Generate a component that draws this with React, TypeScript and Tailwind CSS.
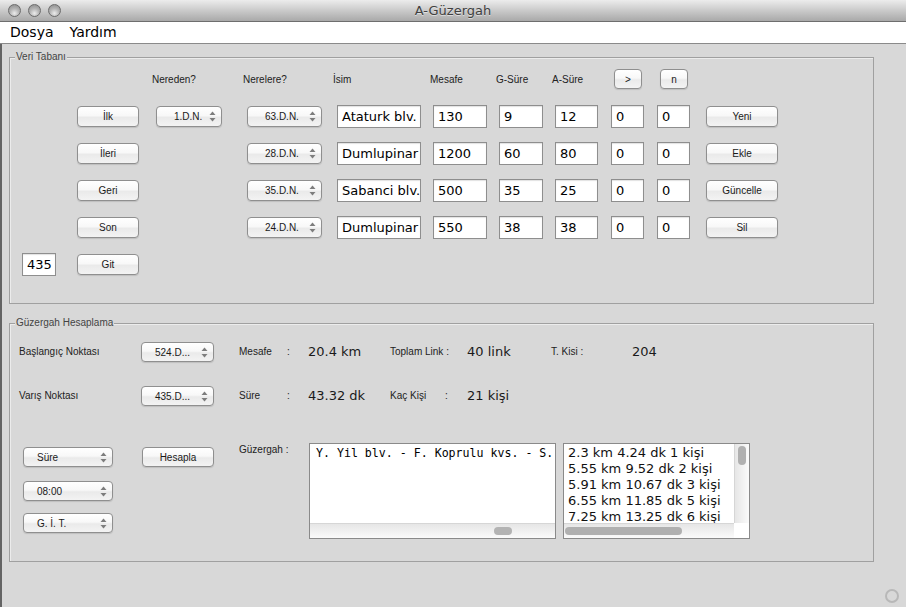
import React from "react";

const dv = "font-['DejaVu_Sans',sans-serif]";
const lib = "font-['Liberation_Sans',Arial,sans-serif]";
const mono = "font-['DejaVu_Sans_Mono',monospace]";
const btnBg =
  "bg-[linear-gradient(to_bottom,#ffffff_0%,#f8f8f8_45%,#eaeaea_55%,#f3f3f3_100%)]";

function Arrows() {
  return (
    <svg width="7" height="11" viewBox="0 0 7 11" className="shrink-0">
      <path d="M3.5 0.5L6.5 4H0.5Z" fill="#7d7d7d" />
      <path d="M0.5 7H6.5L3.5 10.5Z" fill="#7d7d7d" />
    </svg>
  );
}

function Btn({ label, className = "" }: { label: string; className?: string }) {
  return (
    <div
      className={`flex items-center justify-center rounded-[4px] border border-[#8f8f8f] ${btnBg} shadow-[0_1px_1px_rgba(0,0,0,0.12)] text-[10px] text-[#1a1a1a] ${lib} ${className}`}
    >
      {label}
    </div>
  );
}

function Combo({ label, className = "" }: { label: string; className?: string }) {
  return (
    <div
      className={`flex items-center justify-between rounded-[4px] border border-[#8f8f8f] ${btnBg} shadow-[0_1px_1px_rgba(0,0,0,0.12)] text-[10px] text-[#1a1a1a] ${lib} pr-[5px] ${className}`}
    >
      <span>{label}</span>
      <Arrows />
    </div>
  );
}

function TF({ value, className = "" }: { value: string; className?: string }) {
  return (
    <div
      className={`flex items-center h-[23px] bg-white border border-[#8e8e8e] shadow-[inset_0_1px_1px_rgba(0,0,0,0.12)] pl-[4px] text-[13px] text-black whitespace-nowrap overflow-hidden ${dv} ${className}`}
    >
      {value}
    </div>
  );
}

function Label({ text, className = "" }: { text: string; className?: string }) {
  return (
    <span className={`block text-[10px] leading-[12px] text-[#222] whitespace-nowrap ${lib} ${className}`}>{text}</span>
  );
}

function Val({ text, className = "" }: { text: string; className?: string }) {
  return (
    <div className={`flex items-center text-[13px] leading-[16px] text-[#1a1a1a] whitespace-nowrap ${dv} ${className}`}>{text}</div>
  );
}

const rows = [
  { btn: "İlk", from: "1.D.N.", to: "63.D.N.", name: "Ataturk blv.", m: "130", g: "9", a: "12", act: "Yeni" },
  { btn: "İleri", from: "", to: "28.D.N.", name: "Dumlupinar", m: "1200", g: "60", a: "80", act: "Ekle" },
  { btn: "Geri", from: "", to: "35.D.N.", name: "Sabanci blv.", m: "500", g: "35", a: "25", act: "Güncelle" },
  { btn: "Son", from: "", to: "24.D.N.", name: "Dumlupinar", m: "550", g: "38", a: "38", act: "Sil" },
];

const listItems = [
  "2.3 km 4.24 dk 1 kişi",
  "5.55 km 9.52 dk 2 kişi",
  "5.91 km 10.67 dk 3 kişi",
  "6.55 km 11.85 dk 5 kişi",
  "7.25 km 13.25 dk 6 kişi",
];

export default function App() {
  return (
    <div className="relative w-[906px] h-[607px] overflow-hidden bg-[#d8d8d8] flex flex-col">
      {/* Title bar */}
      <div className="h-[22px] shrink-0 border-b border-[#6e6e6e] bg-[linear-gradient(to_bottom,#ececec,#cacaca_50%,#a9a9a9)] grid grid-cols-[1fr_auto_1fr] items-center">
        <div className="flex items-center gap-[7px] pl-[8px]">
          {[0, 1, 2].map((i) => (
            <div
              key={i}
              className="w-[13px] h-[13px] rounded-full border border-[#6c6c6c] bg-[radial-gradient(circle_at_50%_75%,#ececec_0%,#b6b6b6_45%,#888888_100%)]"
            />
          ))}
        </div>
        <div className={`text-[13px] text-[#404040] [text-shadow:0_1px_0_rgba(255,255,255,0.5)] ${dv}`}>A-Güzergah</div>
        <div />
      </div>

      {/* Menu bar */}
      <div className={`h-[22px] shrink-0 bg-white border-b border-[#8a8a8a] flex items-center pl-[10px] gap-[16px] text-[14px] text-black ${dv}`}>
        <span>Dosya</span>
        <span>Yardım</span>
      </div>

      {/* Body */}
      <div className="flex-1 border-l-2 border-[#646464] pt-[13px]">
        {/* Veri Tabanı */}
        <div className="relative ml-[7px] w-[865px] h-[247px] border border-[#a0a0a0] shadow-[inset_1px_1px_0_#ececec]">
          <span className={`absolute left-[5px] top-[-7px] px-[1px] bg-[#d8d8d8] text-[10px] leading-[12px] text-[#444] ${lib}`}>
            Veri Tabanı
          </span>
          <div className="grid grid-cols-[55px_79px_91px_90px_96px_66px_56px_56px_46px_49px_80px] grid-rows-[22px_23px_23px_23px_23px_23px] gap-y-[14px] pt-[11px] pl-[12px] items-center">
            <div />
            <div />
            <Label text="Nereden?" className="-ml-[4px]" />
            <Label text="Nerelere?" className="-ml-[4px]" />
            <Label text="İsim" className="-ml-[4px]" />
            <Label text="Mesafe" className="-ml-[3px]" />
            <Label text="G-Süre" className="-ml-[3px]" />
            <Label text="A-Süre" className="-ml-[3px]" />
            <Btn label=">" className="ml-[3px] w-[28px] h-[20px] self-start" />
            <Btn label="n" className="ml-[3px] w-[28px] h-[20px] self-start" />
            <div />

            {rows.map((r, i) => (
              <React.Fragment key={i}>
                <div />
                <Btn label={r.btn} className="w-[62px] h-[21px]" />
                {r.from ? <Combo label={r.from} className="w-[66px] h-[21px] pl-[17px]" /> : <div />}
                <Combo label={r.to} className="w-[75px] h-[21px] pl-[17px]" />
                <TF value={r.name} className="w-[84px]" />
                <TF value={r.m} className="w-[54px]" />
                <TF value={r.g} className="w-[44px]" />
                <TF value={r.a} className="w-[43px]" />
                <TF value="0" className="w-[33px]" />
                <TF value="0" className="w-[33px]" />
                <Btn label={r.act} className="w-[72px] h-[21px]" />
              </React.Fragment>
            ))}

            <TF value="435" className="w-[34px]" />
            <Btn label="Git" className="w-[62px] h-[21px]" />
          </div>
        </div>

        {/* Güzergah Hesaplama */}
        <div className="relative ml-[7px] mt-[19px] w-[865px] h-[239px] border border-[#a0a0a0] shadow-[inset_1px_1px_0_#ececec] pt-[18px]">
          <span className={`absolute left-[5px] top-[-7px] px-[1px] bg-[#d8d8d8] text-[10px] leading-[12px] text-[#444] ${lib}`}>
            Güzergah Hesaplama
          </span>

          <div className="flex items-center h-[20px] pl-[9px]">
            <div className="w-[122px]"><Label text="Başlangıç Noktası" /></div>
            <div className="w-[98px]"><Combo label="524.D..." className="w-[73px] h-[20px] pl-[13px]" /></div>
            <div className="w-[48px]"><Label text="Mesafe" /></div>
            <div className="w-[21px]"><Label text=":" /></div>
            <Val text="20.4 km" className="w-[82px]" />
            <div className="w-[77px]"><Label text="Toplam Link :" /></div>
            <Val text="40 link" className="w-[84px]" />
            <div className="w-[81px]"><Label text="T. Kisi :" className="text-[9.5px]" /></div>
            <Val text="204" />
          </div>

          <div className="flex items-center h-[20px] pl-[9px] mt-[24px]">
            <div className="w-[122px]"><Label text="Varış Noktası" /></div>
            <div className="w-[98px]"><Combo label="435.D..." className="w-[73px] h-[20px] pl-[13px]" /></div>
            <div className="w-[48px]"><Label text="Süre" /></div>
            <div className="w-[21px]"><Label text=":" /></div>
            <Val text="43.32 dk" className="w-[82px]" />
            <div className="w-[77px] flex items-center">
              <div className="w-[55px]"><Label text="Kaç Kişi" /></div>
              <Label text=":" />
            </div>
            <Val text="21 kişi" className="w-[84px]" />
          </div>

          <div className="flex h-[96px] pl-[13px] mt-[37px]">
            <div className="w-[119px] flex flex-col">
              <Combo label="Süre" className="w-[90px] h-[20px] pl-[13px] mt-[4px]" />
              <Combo label="08:00" className="w-[90px] h-[20px] pl-[13px] mt-[14px]" />
              <Combo label="G. İ. T." className="w-[90px] h-[20px] pl-[13px] mt-[12px]" />
            </div>
            <div className="w-[97px]">
              <Btn label="Hesapla" className="w-[72px] h-[20px] mt-[4px]" />
            </div>
            <div className="w-[70px] pt-[1px]">
              <Label text="Güzergah :" />
            </div>

            {/* text area */}
            <div className="w-[247px] h-[96px] border border-[#8a8a8a] bg-white flex flex-col">
              <div className={`flex-1 overflow-hidden whitespace-nowrap pl-[6px] pt-[2px] text-[11.6px] leading-[14px] text-black ${mono}`}>
                Y. Yil blv. - F. Koprulu kvs. - S.
              </div>
              <div className="h-[15px] border-t border-[#d6d6d6] bg-[linear-gradient(to_bottom,#e6e6e6,#fbfbfb)]">
                <div className="ml-[184px] mt-[3px] w-[18px] h-[8px] rounded-full bg-[#b3b3b3]" />
              </div>
            </div>

            {/* list */}
            <div className="ml-[7px] w-[187px] h-[96px] border border-[#8a8a8a] bg-white flex">
              <div className="flex-1 flex flex-col min-w-0">
                <div className={`flex-1 overflow-hidden pl-[4px] pt-[1px] text-[13px] leading-[16px] text-[#111] whitespace-nowrap ${dv}`}>
                  {listItems.map((t) => (
                    <div key={t}>{t}</div>
                  ))}
                </div>
                <div className="h-[15px] border-t border-[#d6d6d6] bg-[linear-gradient(to_bottom,#e6e6e6,#fbfbfb)]">
                  <div className="ml-[1px] mt-[3px] w-[117px] h-[8px] rounded-full bg-[#b0b0b0]" />
                </div>
              </div>
              <div className="w-[15px] flex flex-col">
                <div className="flex-1 border-l border-[#d6d6d6] bg-[linear-gradient(to_right,#e6e6e6,#fbfbfb)]">
                  <div className="ml-[3px] mt-[2px] w-[8px] h-[19px] rounded-full bg-[#b0b0b0]" />
                </div>
                <div className="h-[15px] bg-white" />
              </div>
            </div>
          </div>
        </div>
      </div>

      {/* resize grip */}
      <div className="absolute right-[7px] bottom-[4px] w-[14px] h-[14px] rounded-full border-2 border-[#b8b8b8]" />
    </div>
  );
}
